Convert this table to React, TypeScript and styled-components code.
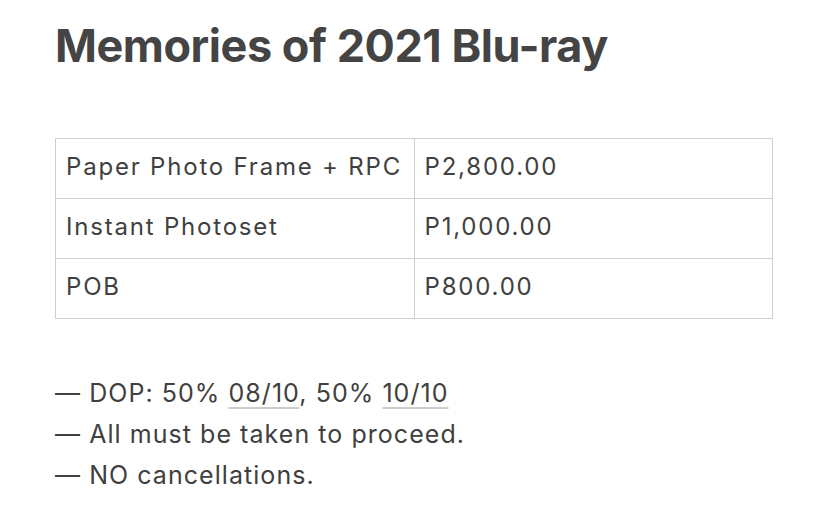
import React from "react";
import styled, { createGlobalStyle } from "styled-components";

const Global = createGlobalStyle`
  html, body { margin: 0; padding: 0; background: #ffffff; }
  body { font-family: Inter, "Noto Sans", sans-serif; color: #404040; -webkit-font-smoothing: antialiased; }
`;

const Page = styled.div`
  width: 828px;
  height: 523px;
  box-sizing: border-box;
  padding: 18px 55px 0 55px;
  display: flex;
  flex-direction: column;
`;

const Title = styled.h1`
  margin: 0;
  font-size: 45px;
  line-height: 56px;
  font-weight: 700;
  color: #444444;
  letter-spacing: -0.45px;
`;

const Table = styled.table`
  margin-top: 64px;
  width: 718px;
  border-collapse: collapse;
  table-layout: fixed;
`;

const Cell = styled.td`
  border: 1px solid #cfcfcf;
  height: 55px;
  padding: 0 10px 4px 10px;
  font-size: 24px;
  letter-spacing: 1.8px;
  color: #404040;
  vertical-align: middle;
  white-space: nowrap;
`;

const Notes = styled.div`
  margin-top: 54px;
  display: flex;
  flex-direction: column;
`;

const Line = styled.div`
  font-size: 25px;
  line-height: 41px;
  letter-spacing: 1.05px;
  color: #404040;
`;

const DateLink = styled.span`
  text-decoration: underline;
  text-decoration-color: #cdcdcd;
  text-decoration-thickness: 1.5px;
  text-underline-offset: 5px;
`;

const rows = [
  ["Paper Photo Frame + RPC", "P2,800.00"],
  ["Instant Photoset", "P1,000.00"],
  ["POB", "P800.00"],
];

export default function App() {
  return (
    <>
      <Global />
      <Page>
        <Title>Memories of 2021 Blu-ray</Title>
        <Table>
          <tbody>
            {rows.map(([name, price]) => (
              <tr key={name}>
                <Cell>{name}</Cell>
                <Cell>{price}</Cell>
              </tr>
            ))}
          </tbody>
        </Table>
        <Notes>
          <Line>
            — DOP: 50% <DateLink>08/10</DateLink>, 50% <DateLink>10/10</DateLink>
          </Line>
          <Line>— All must be taken to proceed.</Line>
          <Line>— NO cancellations.</Line>
        </Notes>
      </Page>
    </>
  );
}
